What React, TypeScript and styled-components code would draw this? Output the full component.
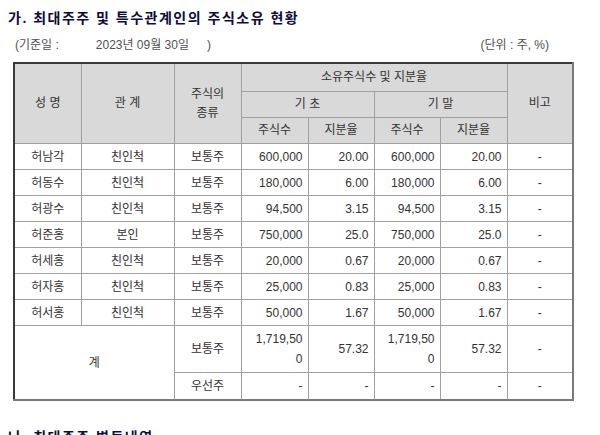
import React from "react";
import styled, { createGlobalStyle } from "styled-components";

const GlobalStyle = createGlobalStyle`
    body {
        margin: 0;
        background: #ffffff;
        font-family: "Liberation Sans", "Noto Sans CJK KR", sans-serif;
        color: #333333;
    }
`;

const Page = styled.div`
    width: 600px;
    height: 435px;
    overflow: hidden;
    padding: 10px 0 0 8px;
    box-sizing: border-box;
`;

const Title = styled.h3<{ $top?: number }>`
    margin: ${p => p.$top ?? 0}px 0 0 0;
    font-size: 14px;
    font-weight: bold;
    letter-spacing: 1.5px;
    line-height: 17px;
    color: #0c0c3a;
    font-family: "Liberation Sans", "Noto Sans CJK KR", sans-serif;
`;

const InfoRow = styled.div`
    display: flex;
    justify-content: space-between;
    width: 534px;
    margin: 11px 0 0 7px;
    font-size: 12px;
    line-height: 15px;
    color: #505050;
`;

const DateGroup = styled.div`
    display: flex;
`;

const DateValue = styled.span<{ $gap: number }>`
    margin-left: ${p => p.$gap}px;
`;

const Table = styled.table`
    margin: 9px 0 0 5px;
    border-collapse: collapse;
    table-layout: fixed;
    width: 559px;
    font-size: 12px;
    border-top: 2px solid #3a3a3a;
    border-left: 2px solid #3a3a3a;
    border-right: 2px solid #7a7a7a;
    border-bottom: 2px solid #7a7a7a;
`;

const Th = styled.th<{ $h?: number }>`
    background: #d9d9d9;
    border: 1px solid #a0a0a0;
    font-weight: normal;
    color: #333333;
    height: ${p => p.$h ?? 25}px;
    padding: 0;
    line-height: 19px;
`;

const Td = styled.td<{ $align?: string; $h?: number }>`
    border: 1px solid #a0a0a0;
    text-align: ${p => p.$align ?? "center"};
    padding: 0 ${p => (p.$align === "right" ? 5 : 0)}px 0 0;
    height: ${p => p.$h ?? 25}px;
    line-height: 20px;
    color: #333333;
`;

type Holder = {
    name: string;
    relation: string;
    kind: string;
    startShares: string;
    startRate: string;
    endShares: string;
    endRate: string;
};

const holders: Holder[] = [
    { name: "허남각", relation: "친인척", kind: "보통주", startShares: "600,000", startRate: "20.00", endShares: "600,000", endRate: "20.00" },
    { name: "허동수", relation: "친인척", kind: "보통주", startShares: "180,000", startRate: "6.00", endShares: "180,000", endRate: "6.00" },
    { name: "허광수", relation: "친인척", kind: "보통주", startShares: "94,500", startRate: "3.15", endShares: "94,500", endRate: "3.15" },
    { name: "허준홍", relation: "본인", kind: "보통주", startShares: "750,000", startRate: "25.0", endShares: "750,000", endRate: "25.0" },
    { name: "허세홍", relation: "친인척", kind: "보통주", startShares: "20,000", startRate: "0.67", endShares: "20,000", endRate: "0.67" },
    { name: "허자홍", relation: "친인척", kind: "보통주", startShares: "25,000", startRate: "0.83", endShares: "25,000", endRate: "0.83" },
    { name: "허서홍", relation: "친인척", kind: "보통주", startShares: "50,000", startRate: "1.67", endShares: "50,000", endRate: "1.67" },
];

const widths = [67, 93, 67, 67, 66, 66, 67, 66];

export default function App() {
    return (
        <Page>
            <GlobalStyle />
            <Title>가. 최대주주 및 특수관계인의 주식소유 현황</Title>
            <InfoRow>
                <DateGroup>
                    <span>(기준일 :</span>
                    <DateValue $gap={37}>2023년 09월 30일</DateValue>
                    <DateValue $gap={18}>)</DateValue>
                </DateGroup>
                <span>(단위 : 주, %)</span>
            </InfoRow>
            <Table>
                <colgroup>
                    {widths.map((w, i) => <col key={i} style={{ width: w }} />)}
                </colgroup>
                <thead>
                    <tr>
                        <Th rowSpan={3}>성 명</Th>
                        <Th rowSpan={3}>관 계</Th>
                        <Th rowSpan={3}>주식의<br />종류</Th>
                        <Th colSpan={4} $h={27}>소유주식수 및 지분율</Th>
                        <Th rowSpan={3}>비고</Th>
                    </tr>
                    <tr>
                        <Th colSpan={2}>기 초</Th>
                        <Th colSpan={2}>기 말</Th>
                    </tr>
                    <tr>
                        <Th>주식수</Th>
                        <Th>지분율</Th>
                        <Th>주식수</Th>
                        <Th>지분율</Th>
                    </tr>
                </thead>
                <tbody>
                    {holders.map(h => (
                        <tr key={h.name}>
                            <Td>{h.name}</Td>
                            <Td>{h.relation}</Td>
                            <Td>{h.kind}</Td>
                            <Td $align="right">{h.startShares}</Td>
                            <Td $align="right">{h.startRate}</Td>
                            <Td $align="right">{h.endShares}</Td>
                            <Td $align="right">{h.endRate}</Td>
                            <Td>-</Td>
                        </tr>
                    ))}
                    <tr>
                        <Td rowSpan={2} colSpan={2}>계</Td>
                        <Td $h={46}>보통주</Td>
                        <Td $align="right" $h={46}>1,719,50<br />0</Td>
                        <Td $align="right" $h={46}>57.32</Td>
                        <Td $align="right" $h={46}>1,719,50<br />0</Td>
                        <Td $align="right" $h={46}>57.32</Td>
                        <Td $h={46}>-</Td>
                    </tr>
                    <tr>
                        <Td $h={26}>우선주</Td>
                        <Td $align="right" $h={26}>-</Td>
                        <Td $align="right" $h={26}>-</Td>
                        <Td $align="right" $h={26}>-</Td>
                        <Td $align="right" $h={26}>-</Td>
                        <Td $h={26}>-</Td>
                    </tr>
                </tbody>
            </Table>
            <Title $top={28}>나. 최대주주 변동내역</Title>
        </Page>
    );
}
